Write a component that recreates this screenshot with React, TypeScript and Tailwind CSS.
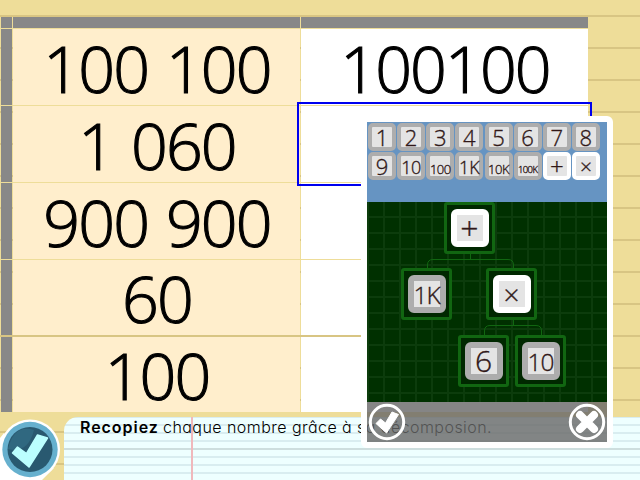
import React from "react";

const rows = [
  { left: "100 100", right: "100100", cls: "h-[76px] mb-px" },
  { left: "1 060", right: "", cls: "h-[76px] mb-px" },
  { left: "900 900", right: "", cls: "h-[76px] mb-px" },
  { left: "60", right: "", cls: "h-[75px] mb-[2px]" },
  { left: "100", right: "", cls: "h-[75px]" },
];

const keys = [
  ["1", "text-[22px]"], ["2", "text-[22px]"], ["3", "text-[22px]"], ["4", "text-[22px]"],
  ["5", "text-[22px]"], ["6", "text-[22px]"], ["7", "text-[22px]"], ["8", "text-[22px]"],
  ["9", "text-[22px]"], ["10", "text-[18px] tracking-[-0.5px] pt-[2px]"], ["100", "text-[13px] tracking-[-0.5px] pt-[6px]"],
  ["1K", "text-[18px] pt-[2px]"], ["10K", "text-[13px] tracking-[-0.5px] pt-[6px]"], ["100K", "text-[9.5px] tracking-[-0.6px] pt-[8px]"],
  ["+", "text-[24px]"], ["×", "text-[21px]"],
];

const nodes = [
  { label: "+", at: "left-[77px] top-0", text: "text-[32px]" },
  { label: "1K", at: "left-[34px] top-[66px]", text: "text-[24.5px] pt-[2px] tracking-[-1px]" },
  { label: "×", at: "left-[119px] top-[66px]", text: "text-[28px]" },
  { label: "6", at: "left-[91px] top-[133px]", text: "text-[30px]" },
  { label: "10", at: "left-[148px] top-[133px]", text: "text-[24.5px] pt-[2px] tracking-[-1px]" },
];

const isOperator = (label: string) => label === "+" || label === "×";

function BigNumber({ value }: { value: string }) {
  return (
    <span className="block whitespace-pre pt-[2px] pl-px text-[64.5px] leading-none font-light tracking-[-1.9px] text-black [-webkit-text-stroke:1.1px_black] [word-spacing:3px]">
      {value}
    </span>
  );
}

function Key({ label, text }: { label: string; text: string }) {
  return (
    <div className={`flex h-7 w-7 items-center justify-center rounded-[5px] border-4 bg-[#e4e4e4] ${isOperator(label) ? "border-white" : "border-[#adadad]"}`}>
      <span className={`whitespace-nowrap font-light leading-none text-[#301818] [-webkit-text-stroke:0.35px_#301818] ${text}`}>{label}</span>
    </div>
  );
}

function TreeNode({ label, at, text }: { label: string; at: string; text: string }) {
  return (
    <div className={`absolute flex h-[52px] w-[51px] items-center justify-center rounded-[3px] border-[3px] border-[#116611] bg-[#002800] ${at}`}>
      <div className={`flex h-[38px] w-[38px] items-center justify-center rounded-[6px] border-[6px] bg-[#e4e4e4] ${isOperator(label) ? "border-white" : "border-[#adadad]"}`}>
        <span className={`whitespace-nowrap font-light leading-none text-[#301818] [-webkit-text-stroke:0.35px_#301818] ${text}`}>{label}</span>
      </div>
    </div>
  );
}

export default function App() {
  return (
    <div className="relative flex h-[480px] w-[640px] flex-col overflow-hidden bg-[#eedd99] bg-[linear-gradient(#d8c583_2px,transparent_2px)] bg-[length:100%_32px] bg-[position:0_15px] pt-[17px] font-['Open_Sans',sans-serif]">
      <div className="mb-px ml-px flex h-[11px] w-[587px] shrink-0 gap-px">
        <div className="w-[11px] bg-[#888888]" />
        <div className="w-[287px] bg-[#888888]" />
        <div className="w-[287px] bg-[#888888]" />
      </div>
      {rows.map((r, i) => (
        <div key={i} className={`ml-px flex w-[587px] shrink-0 gap-px ${r.cls}`}>
          <div className="w-[11px] bg-[#888888]" />
          <div className="flex w-[287px] items-center justify-center bg-[#ffeecc]">
            <BigNumber value={r.left} />
          </div>
          <div className="flex w-[287px] items-center justify-center bg-white">
            {r.right && <BigNumber value={r.right} />}
          </div>
        </div>
      ))}

      <div className="mt-[5px] ml-16 h-[63px] shrink-0 rounded-tl-[14px] bg-[#eeffff] bg-[linear-gradient(90deg,transparent_127px,#f0b8bc_127px,#f0b8bc_129px,transparent_129px),linear-gradient(transparent_31px,#cddede_31px,#cddede_33px,transparent_33px),linear-gradient(#d9edf0_2px,transparent_2px)] bg-[length:100%_100%,100%_100%,100%_8px] bg-[position:0_0,0_0,0_7px] pl-4">
        <p className="flex whitespace-nowrap font-['Inter',sans-serif] text-[16px] leading-[21px] text-black [font-feature-settings:'cv11']">
          <b className="w-[83px] font-semibold tracking-[0.95px]">Recopiez</b>
          <span className="font-light tracking-[0.45px]">chaque nombre grâce à sa décomposion.</span>
        </p>
      </div>

      <div className="absolute left-[297px] top-[102px] h-[84px] w-[295px] border-2 border-[#0000ee]" />

      <svg className="absolute left-0 top-[416px]" width="64" height="64" viewBox="0 416 64 64">
        <path d="M0 438L4 433L30 470L54 468L42 480H0Z" fill="#fff" />
        <circle cx="30" cy="449.500" r="30" fill="#fff" />
        <circle cx="30" cy="449.500" r="27.700" fill="#66b0ce" />
        <circle cx="30" cy="449.500" r="22.500" fill="#295970" />
        <path d="M8 449Q28 454 34 430Q14 424 8 449Z" fill="#306880" />
        <path d="M12.500 453L17.500 447L26.500 453.500L37.500 435L47.500 438L29 467Z" fill="#bff" stroke="#bff" strokeWidth="1.500" strokeLinejoin="round" />
      </svg>

      <div className="absolute left-[361px] top-[116px] h-[332px] w-[252px] rounded-[6px] border-[6px] border-white">
        <div className="grid h-20 grid-cols-[repeat(8,29.14px)] grid-rows-[29px_28px] bg-[#6694c2] pl-px pt-px">
          {keys.map(([label, text]) => <Key key={label} label={label} text={text} />)}
        </div>
        <div className="relative h-[200px] bg-[#003000] bg-[linear-gradient(90deg,#0c3c0c_2px,transparent_2px),linear-gradient(#0c3c0c_2px,transparent_2px)] bg-[length:16px_16px] bg-[position:0_14px]">
          <svg className="absolute inset-0" width="240" height="200" fill="none" stroke="#116611">
            <path d="M103.500 51V57.500M60.500 67V63Q60.500 57.500 66 57.500H141Q146.500 57.500 146.500 63V67M146.500 117V123.500M117.500 133V129Q117.500 123.500 123 123.500H169Q174.500 123.500 174.500 129V133" />
          </svg>
          {nodes.map((n) => <TreeNode key={n.label} {...n} />)}
        </div>
        <div className="flex h-10 items-center justify-between bg-[#666666]/80 px-px">
          <svg width="38" height="38" viewBox="0 0 38 38">
            <circle cx="19" cy="19" r="16.700" fill="none" stroke="#fff" strokeWidth="3" />
            <path d="M8 20.500L12.500 16L17.500 20L24 9L30.500 11.500L18.500 30Z" fill="#fff" stroke="#fff" strokeLinejoin="round" />
          </svg>
          <svg width="38" height="38" viewBox="0 0 38 38">
            <circle cx="19" cy="19" r="16.700" fill="none" stroke="#fff" strokeWidth="3" />
            <path d="M12 12L26 26M26 12L12 26" stroke="#fff" strokeWidth="8" strokeLinecap="round" />
          </svg>
        </div>
      </div>
    </div>
  );
}
